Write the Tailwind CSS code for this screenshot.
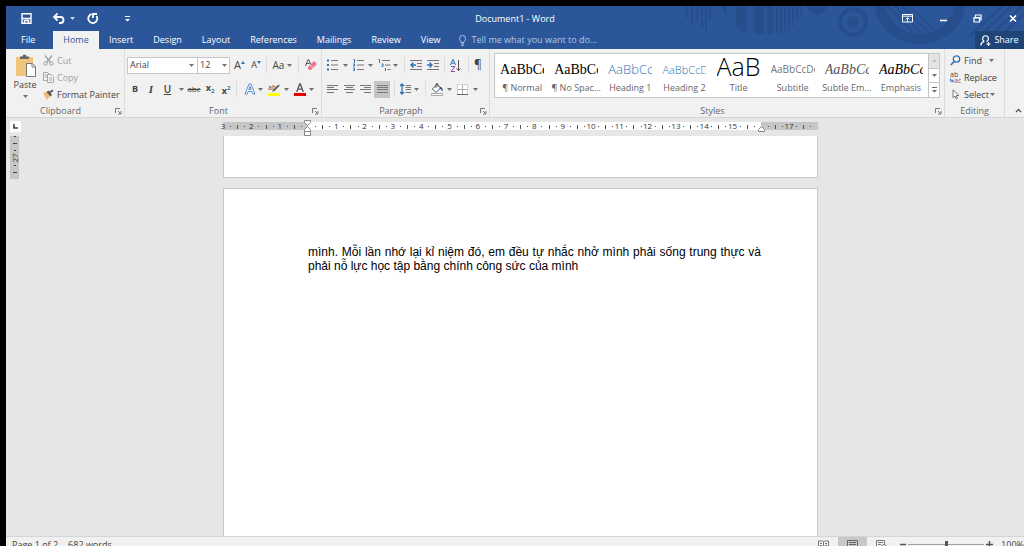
<!DOCTYPE html>
<html lang="en">
<head>
    <meta charset="UTF-8">
    <meta name="viewport" content="width=device-width, initial-scale=1.0">
    <title>Document1 - Word</title>
    <script src="https://cdn.jsdelivr.net/npm/@tailwindcss/browser@4"></script>
</head>
<body class="bg-black">
    <!-- shared symbols -->
    <svg class="hidden">
        <symbol id="caret" viewBox="0 0 5 3"><path d="M0 0h5L2.500 3z" fill="currentColor" opacity=".75"/></symbol>
        <symbol id="launcher" viewBox="0 0 7 7"><path d="M.5 5V.5H5M3 3l2.500 2.500M6 3v3H3" fill="none" stroke="#777"/></symbol>
    </svg>

    <div class="h-screen pl-1.5 pt-1.5 flex flex-col overflow-hidden font-['Open_Sans','Noto_Sans',sans-serif] text-[9px] leading-3 text-[#444]">

        <!-- title bar + tabs -->
        <header class="relative shrink-0 bg-[#2b579a] text-white">
            <svg class="absolute right-0 top-0 pointer-events-none" width="344" height="43" viewBox="0 0 344 43" fill="#264e8c" stroke="#264e8c">
                <path d="M7 0v12M12 0v19M17 0v16M22 0v22M26 0v25M30 0v15" stroke-width="2" fill="none"/>
                <path d="M41 0h6v9z M56 0h10v27q-6-2-10-7z M74 0h10v28q-5 1-10-1z" stroke="none"/>
                <path d="M87 0h6v28h-6z" stroke="none"/>
                <path d="M97 0v28M101 0v27M105 0v26M109 0v24M113 0v20M117 0v15M121 0v9" stroke-width="2" fill="none"/>
                <path d="M127 0h20q-3 9-10 9t-10-9z" stroke="none"/>
                <circle cx="173" cy="16" r="13" stroke-width="4" fill="none"/>
                <circle cx="173" cy="16" r="6" stroke="none"/>
                <path d="M200-5a40 38 0 0 0 80 0" stroke-width="11" fill="none"/>
                <path d="M208 0l32 34M215 0l32 33M222 0l32 31M229 0l30 28" stroke-width="2" fill="none"/>
                <path d="M290 30L322 0M300 30L332 0M310 30L342 0M324 27L344 8" stroke-width="3" fill="none"/>
            </svg>

            <div class="relative flex items-center h-[25px]">
                <div class="flex-1 flex items-center">
                    <button aria-label="Save" class="ml-[15px]"><svg class="block" width="11" height="11" viewBox="0 0 11 11"><path d="M1 .7h9v9.600H1zM1 5.500h9M3.500 10V7.500h4V10" fill="none" stroke="#fff" stroke-width="1.400"/></svg></button>
                    <button aria-label="Undo" class="ml-[21px]"><svg class="block" width="12" height="11" viewBox="0 0 12 11"><path d="M1 4h6.500a3 3 0 0 1 0 6H6M4.500.5L1 4l3.500 3.500" fill="none" stroke="#fff" stroke-width="1.800"/></svg></button>
                    <button aria-label="Undo list" class="ml-[5px]"><svg class="block" width="5" height="3"><use href="#caret"/></svg></button>
                    <button aria-label="Repeat" class="ml-3"><svg class="block" width="12" height="11" viewBox="0 0 12 11"><path d="M4.500 1.200a4.500 4.500 0 1 0 5 1.800M6 5V1h4" fill="none" stroke="#fff" stroke-width="1.800"/></svg></button>
                    <button aria-label="Customize Quick Access Toolbar" class="ml-[26px]"><svg class="block" width="5" height="6" viewBox="0 0 5 6"><path d="M0 .5h5" stroke="#fff"/><path d="M0 3h5L2.500 5.500z" fill="#fff"/></svg></button>
                </div>
                <h1>Document1 - Word</h1>
                <div class="flex-1 flex justify-end gap-3">
                    <button aria-label="Ribbon Display Options" class="w-[23px] flex justify-center"><svg width="11" height="9" viewBox="0 0 11 9"><path d="M.5.5h10v7.500H.5zM.5 2.200h10M5.500 7.500V4M3.700 5.500l1.800-1.800 1.800 1.800" fill="none" stroke="#fff"/></svg></button>
                    <button aria-label="Minimize" class="w-[23px] flex justify-center"><svg width="8" height="9"><path d="M1 6.500h7" stroke="#fff" stroke-width="1.600"/></svg></button>
                    <button aria-label="Restore" class="w-[23px] flex justify-center"><svg width="9" height="9" viewBox="0 0 9 9"><path d="M1 3.500h5.500V8H1zM2.500 3V1h5.500v5H7M1 4h5" fill="none" stroke="#fff" stroke-width="1.200"/></svg></button>
                    <button aria-label="Close" class="w-[23px] flex justify-center"><svg width="8" height="9" viewBox="0 0 8 9"><path d="M1 1.500l6 6M7 1.500l-6 6" stroke="#fff" stroke-width="1.700"/></svg></button>
                </div>
            </div>

            <nav class="relative flex items-stretch h-[18px]">
                <a href="#" class="w-[47px] pl-[15px] leading-[18px]">File</a>
                <a href="#" class="w-[46px] text-center leading-[18px] bg-[#f1f1f1] text-[#2b579a]">Home</a>
                <a href="#" class="px-2.5 leading-[18px]">Insert</a>
                <a href="#" class="px-2.5 leading-[18px]">Design</a>
                <a href="#" class="px-2.5 leading-[18px]">Layout</a>
                <a href="#" class="px-2.5 leading-[18px]">References</a>
                <a href="#" class="px-2.5 leading-[18px]">Mailings</a>
                <a href="#" class="px-2.5 leading-[18px]">Review</a>
                <a href="#" class="px-2.5 leading-[18px]">View</a>
                <label class="flex items-center gap-1 ml-2 text-[#b4c6e2]">
                    <svg width="9" height="11" viewBox="0 0 9 11"><path d="M3 7.500C3 6 1.500 5.500 1.500 3.500a3 3 0 0 1 6 0C7.500 5.500 6 6 6 7.500zM3 9h3M3.500 10.500h2" fill="none" stroke="currentColor"/></svg>
                    <input type="text" aria-label="Tell me" placeholder="Tell me what you want to do..." class="w-[150px] bg-transparent outline-none placeholder:text-[#b4c6e2]">
                </label>
                <button class="ml-auto w-[49px] flex items-center justify-center gap-[3px] bg-[#1e4478]">
                    <svg width="11" height="11" viewBox="0 0 11 11"><path d="M4.300 6.300a2.900 2.900 0 1 1 2.400 0M.8 10.500C1 8 2.500 6.800 4.300 6.300M6.500 6.300l.8.500M8.500 7v4M6.500 9h4" fill="none" stroke="#fff" stroke-width="1.200"/></svg>
                    Share
                </button>
            </nav>
        </header>

        <!-- ribbon -->
        <section class="shrink-0 flex h-[69px] bg-[#f1f1f1] border-b border-[#d5d5d5]">

            <div class="w-[118px] flex flex-col">
                <div class="flex-1 flex pl-2">
                    <button class="w-[22px] flex flex-col items-center pt-[5px]">
                        <svg width="22" height="24" viewBox="0 0 22 24"><path d="M2 3h17v19H2z" fill="#eec57b"/><path d="M6 5V2.500h2.500a2 2 0 0 1 4 0H15V5z" fill="#666"/><path d="M12.500 9.500h6l3 3v10h-9z" fill="#fff" stroke="#777"/><path d="M18 9.500V13h3.500" fill="none" stroke="#777"/></svg>
                        <span class="mt-px">Paste</span>
                        <svg class="mt-1" width="5" height="3"><use href="#caret"/></svg>
                    </button>
                    <div class="flex flex-col pl-[7px] pt-[3px]">
                        <button class="h-[17px] flex items-center gap-[3px] text-[#a0a0a0]">
                            <svg width="11" height="11" viewBox="0 0 11 11"><path d="M2 .5l5.500 7M9 .5L3.500 7.500" fill="none" stroke="#a0a0a0" stroke-width="1.300"/><circle cx="2.500" cy="8.500" r="1.700" fill="none" stroke="#a0a0a0"/><circle cx="8.500" cy="8.500" r="1.700" fill="none" stroke="#a0a0a0"/></svg>Cut
                        </button>
                        <button class="h-[17px] flex items-center gap-[3px] text-[#a0a0a0]">
                            <svg width="11" height="11" viewBox="0 0 11 11"><path d="M4 8.500H.5v-8h4l1.500 1.500M4.500 2.500h4l2 2v6h-6zM2 3h2M2 5h2M6 6h3M6 8h3" fill="none" stroke="#a8a8a8"/></svg>Copy
                        </button>
                        <button class="h-[17px] flex items-center gap-[3px] whitespace-nowrap">
                            <svg width="11" height="11" viewBox="0 0 11 11"><path d="M0 4l4-1 3 4-3 4z" fill="#eeb96a"/><path d="M3.500 3l2-1.500L9 6 7.500 7.500zM6.500 2.500L9.500.5l1 1.500-3 2z" fill="#555"/></svg>Format Painter
                        </button>
                    </div>
                </div>
                <div class="h-3 flex items-center"><span class="flex-1 text-center text-[#666]">Clipboard</span><button aria-label="Clipboard settings" class="mr-0.5"><svg class="block" width="7" height="7"><use href="#launcher"/></svg></button></div>
            </div>

            <div class="w-[197px] flex flex-col border-l border-[#dcdcdc]">
                <div class="flex-1 pl-0.5 pt-2">
                    <div class="flex items-center h-4">
                        <div class="w-[71px] h-[17px] flex items-center bg-white border border-[#c6c6c6] pl-0.5 pr-[3px]">
                            <select aria-label="Font" class="flex-1 min-w-0 appearance-none outline-none"><option>Arial</option></select>
                            <svg width="5" height="3"><use href="#caret"/></svg>
                        </div>
                        <div class="w-8 h-[17px] flex items-center bg-white border border-l-0 border-[#c6c6c6] pl-0.5 pr-0.5">
                            <select aria-label="Font size" class="flex-1 min-w-0 appearance-none outline-none"><option>12</option></select>
                            <svg width="5" height="3"><use href="#caret"/></svg>
                        </div>
                        <button aria-label="Grow Font" class="w-[17px] flex items-center justify-center ml-px text-[11px]">A<svg class="mb-1.5" width="4" height="3"><path d="M0 3h4L2 0z" fill="#2f70b7"/></svg></button>
                        <button aria-label="Shrink Font" class="w-4 flex items-center justify-center">A<svg class="mb-1.5" width="4" height="3"><path d="M0 0h4L2 3z" fill="#2f70b7"/></svg></button>
                        <i class="w-px h-4 mx-0.5 bg-[#dcdcdc]"></i>
                        <button aria-label="Change Case" class="w-[27px] flex items-center justify-center gap-[3px] text-[10px]">Aa<svg width="5" height="3"><use href="#caret"/></svg></button>
                        <i class="w-px h-4 mx-0.5 bg-[#dcdcdc]"></i>
                        <button aria-label="Clear Formatting" class="ml-1"><svg class="block" width="12" height="12" viewBox="0 0 12 12"><path d="M.5 7L3 .7h.8L6 6M1.500 4.500h3" fill="none" stroke="#555"/><path d="M3 8l6-6 3 3-6 6H4.500L3 9.500z" fill="#e8788e"/><path d="M5 6l3.500 3" stroke="#f7d3da"/></svg></button>
                    </div>
                    <div class="flex items-center h-4 mt-2">
                        <button class="w-4 font-bold">B</button>
                        <button class="w-4 italic font-['Liberation_Serif',serif] text-[11px] font-bold">I</button>
                        <button class="w-[17px] font-semibold text-[10px] underline">U</button>
                        <button aria-label="Underline style" class="w-2.5 flex justify-center"><svg width="5" height="3"><use href="#caret"/></svg></button>
                        <button class="w-4 flex justify-center line-through text-[8px]">abc</button>
                        <button aria-label="Subscript" class="w-4 font-bold">x<span class="text-[6px] align-[-2px] text-[#2f70b7]">2</span></button>
                        <button aria-label="Superscript" class="w-4 font-bold">x<span class="text-[6px] align-[4px] text-[#2f70b7]">2</span></button>
                        <i class="w-px h-4 ml-0.5 mr-[7px] bg-[#dcdcdc]"></i>
                        <button aria-label="Text Effects" class="w-6 flex items-center gap-0.5"><svg width="12" height="12" viewBox="0 0 12 12"><path d="M1 11L5 1h2l4 10H8.800L8 8.500H4L3.200 11zM4.800 6.500h2.400L6 3.200z" fill="#fff" stroke="#4a83c4" stroke-width=".9"/></svg><svg width="5" height="3"><use href="#caret"/></svg></button>
                        <button aria-label="Text Highlight Color" class="w-[26px] flex items-center gap-1"><svg width="12" height="13" viewBox="0 0 12 13"><path d="M0 10h12v3H0z" fill="#ffff00"/><path d="M4 9l1-2 5.500-5.500 1.300 1.200L6.500 8z" fill="#666"/><text x="0" y="7" font-size="7" fill="#444">ab</text></svg><svg width="5" height="3"><use href="#caret"/></svg></button>
                        <button aria-label="Font Color" class="w-[22px] flex items-center gap-[3px]"><svg width="12" height="13" viewBox="0 0 12 13"><path d="M0 10h12v3H0z" fill="#e60000"/><path d="M2.700 9L5.700 1h.6l3 8M4 6.200h4" fill="none" stroke="#555" stroke-width="1.300"/></svg><svg width="5" height="3"><use href="#caret"/></svg></button>
                    </div>
                </div>
                <div class="h-3 flex items-center"><span class="flex-1 text-center text-[#666]">Font</span><button aria-label="Font settings" class="mr-0.5"><svg class="block" width="7" height="7"><use href="#launcher"/></svg></button></div>
            </div>

            <div class="w-[168px] flex flex-col border-l border-[#dcdcdc]">
                <div class="flex-1 pl-[5px] pt-2">
                    <div class="flex items-center h-4">
                        <button aria-label="Bullets" class="w-[26px] flex items-center gap-1"><svg width="12" height="12" viewBox="0 0 12 12"><path d="M0 1.500h2M0 6h2M0 10.500h2" stroke="#2f70b7" stroke-width="2"/><path d="M4 1.500h7M4 6h7M4 10.500h7" stroke="#777"/></svg><svg width="5" height="3"><use href="#caret"/></svg></button>
                        <button aria-label="Numbering" class="w-[25px] flex items-center gap-[3px]"><svg width="12" height="12" viewBox="0 0 12 12"><path d="M.5.5h1V4M0 5h1.500v2H0M0 9h1.500v2.500H0" fill="none" stroke="#2f70b7"/><path d="M4 1.500h7M4 6h7M4 10.500h7" stroke="#777"/></svg><svg width="5" height="3"><use href="#caret"/></svg></button>
                        <button aria-label="Multilevel List" class="w-[26px] flex items-center gap-0.5"><svg width="13" height="12" viewBox="0 0 13 12"><path d="M.5.5h1V4M3.500 5H5v2.500H3.500M7.500 9v3" fill="none" stroke="#2f70b7"/><path d="M4 1.500h8M7 6h5.500M9.500 10.500h3" stroke="#777"/></svg><svg width="5" height="3"><use href="#caret"/></svg></button>
                        <i class="w-px h-4 mr-[5px] bg-[#dcdcdc]"></i>
                        <button aria-label="Decrease Indent" class="w-[17px]"><svg class="block" width="12" height="11" viewBox="0 0 12 11"><path d="M0 .5h12M7 3.500h5M7 6.500h5M0 9.500h12" stroke="#777"/><path d="M6 5H1M3.500 2.500L1 5l2.500 2.500" fill="none" stroke="#2f70b7" stroke-width="1.400"/></svg></button>
                        <button aria-label="Increase Indent" class="w-[17px]"><svg class="block" width="12" height="11" viewBox="0 0 12 11"><path d="M0 .5h12M7 3.500h5M7 6.500h5M0 9.500h12" stroke="#777"/><path d="M0 5h5M2.500 2.500L5 5 2.500 7.500" fill="none" stroke="#2f70b7" stroke-width="1.400"/></svg></button>
                        <i class="w-px h-4 mr-[5px] bg-[#dcdcdc]"></i>
                        <button aria-label="Sort" class="w-[18px]"><svg class="block" width="12" height="13" viewBox="0 0 12 13"><path d="M.5 6L2.800.5h.4L5.500 6M1.500 4.200h3" fill="none" stroke="#2f70b7"/><path d="M1 7.500h4L1 12.500h4" fill="none" stroke="#84559c"/><path d="M8.500 1v10.500M6.500 9.500l2 2 2-2" fill="none" stroke="#555"/></svg></button>
                        <i class="w-px h-4 mr-[3px] bg-[#dcdcdc]"></i>
                        <button aria-label="Show/Hide" class="w-3 text-[12px]">¶</button>
                    </div>
                    <div class="flex items-center h-4 mt-2">
                        <button aria-label="Align Left" class="w-[17px]"><svg class="block" width="11" height="10" viewBox="0 0 11 10"><path d="M0 1.500h11M0 3.500h7M0 5.500h11M0 8.500h7" stroke="#777"/></svg></button>
                        <button aria-label="Center" class="w-4"><svg class="block" width="11" height="10" viewBox="0 0 11 10"><path d="M0 1.500h11M2 3.500h7M0 5.500h11M2 8.500h7" stroke="#777"/></svg></button>
                        <button aria-label="Align Right" class="w-[14px]"><svg class="block" width="11" height="10" viewBox="0 0 11 10"><path d="M0 1.500h11M4 3.500h7M0 5.500h11M4 8.500h7" stroke="#777"/></svg></button>
                        <button aria-label="Justify" class="w-4 h-[17px] flex items-center justify-center bg-[#c5c5c5]"><svg width="11" height="10" viewBox="0 0 11 10"><path d="M0 1.500h11M0 3.500h11M0 5.500h11M0 8.500h11" stroke="#777"/></svg></button>
                        <i class="w-px h-4 ml-1 mr-[5px] bg-[#dcdcdc]"></i>
                        <button aria-label="Line Spacing" class="w-[25px] flex items-center gap-[3px]"><svg width="11" height="12" viewBox="0 0 11 12"><path d="M2 1v10M0 3l2-2 2 2M0 9l2 2 2-2" fill="none" stroke="#2f70b7" stroke-width="1.300"/><path d="M5.500 2.500H11M5.500 4.500H11M5.500 6.500H11M5.500 9.500H11" stroke="#777"/></svg><svg width="5" height="3"><use href="#caret"/></svg></button>
                        <i class="w-px h-4 mr-[5px] bg-[#dcdcdc]"></i>
                        <button aria-label="Shading" class="w-[26px] flex items-center gap-[3px]"><svg width="13" height="13" viewBox="0 0 13 13"><path d="M.5 10.500h11v2H.5z" fill="#fff" stroke="#aaa"/><path d="M6 1L1.500 6 5 9.500 9.500 5z" fill="#fff" stroke="#555"/><path d="M5 5V1.500a1 1 0 0 1 2 0V4" fill="none" stroke="#555"/><path d="M9 3.500q3.500 1 2.500 5-1-2-3-3z" fill="#2f5f9f"/></svg><svg width="5" height="3"><use href="#caret"/></svg></button>
                        <button aria-label="Borders" class="flex items-center gap-[5px]"><svg width="11" height="11" viewBox="0 0 11 11"><path d="M.5.5h10v10H.5z" fill="#fff" stroke="#aaa" stroke-dasharray="1 1"/><path d="M5.500 1v9M1 5.500h9" stroke="#aaa"/><path d="M0 10.500h11" stroke="#666"/></svg><svg width="5" height="3"><use href="#caret"/></svg></button>
                    </div>
                </div>
                <div class="h-3 flex items-center"><span class="flex-1 text-center text-[#666]">Paragraph</span><button aria-label="Paragraph settings" class="mr-0.5"><svg class="block" width="7" height="7"><use href="#launcher"/></svg></button></div>
            </div>

            <div class="flex-1 min-w-0 flex flex-col border-l border-[#dcdcdc]">
                <div class="flex-1 pl-1 pr-1 pt-1">
                    <div class="h-[45px] flex bg-white border border-[#c6c6c6]">
                        <div class="flex-1 min-w-0 grid grid-cols-8 text-[#666]">
                            <button class="flex flex-col items-center"><span class="h-7 w-11 overflow-hidden whitespace-nowrap text-left leading-[31px] font-['Liberation_Serif',serif] text-[14px] text-black">AaBbCcDd</span>¶ Normal</button>
                            <button class="flex flex-col items-center whitespace-nowrap"><span class="h-7 w-11 overflow-hidden whitespace-nowrap text-left leading-[31px] font-['Liberation_Serif',serif] text-[14px] text-black">AaBbCcDd</span>¶ No Spac...</button>
                            <button class="flex flex-col items-center"><span class="h-7 w-11 overflow-hidden whitespace-nowrap text-left leading-[31px] font-['Open_Sans',sans-serif] font-light text-[13px] text-[#2e74b5]">AaBbCcDd</span>Heading 1</button>
                            <button class="flex flex-col items-center"><span class="h-7 w-11 overflow-hidden whitespace-nowrap text-left leading-[31px] font-['Open_Sans',sans-serif] font-light text-[11px] text-[#2e74b5]">AaBbCcDd</span>Heading 2</button>
                            <button class="flex flex-col items-center"><span class="h-7 w-11 overflow-hidden whitespace-nowrap text-left leading-6 font-['Open_Sans',sans-serif] font-light text-[25px] text-black">AaBb</span>Title</button>
                            <button class="flex flex-col items-center"><span class="h-7 w-11 overflow-hidden whitespace-nowrap text-left leading-[31px] text-[10px] text-[#777]">AaBbCcDd</span>Subtitle</button>
                            <button class="flex flex-col items-center whitespace-nowrap"><span class="h-7 w-11 overflow-hidden whitespace-nowrap text-left leading-[31px] font-['Liberation_Serif',serif] italic text-[14px] text-[#555]">AaBbCcDd</span>Subtle Em...</button>
                            <button class="flex flex-col items-center"><span class="h-7 w-11 overflow-hidden whitespace-nowrap text-left leading-[31px] font-['Liberation_Serif',serif] italic text-[14px] text-black">AaBbCcDd</span>Emphasis</button>
                        </div>
                        <div class="w-[11px] flex flex-col border-l border-[#c6c6c6] divide-y divide-[#c6c6c6]">
                            <button aria-label="Previous row" class="flex-1 flex items-center justify-center bg-[#e4e4e4] text-[#b5b5b5]"><svg class="rotate-180" width="5" height="3"><use href="#caret"/></svg></button>
                            <button aria-label="Next row" class="flex-1 flex items-center justify-center"><svg width="5" height="3"><use href="#caret"/></svg></button>
                            <button aria-label="More styles" class="flex-1 flex items-center justify-center"><svg width="5" height="6" viewBox="0 0 5 6"><path d="M0 .5h5" stroke="#666"/><path d="M0 3h5L2.500 5.500z" fill="#666"/></svg></button>
                        </div>
                    </div>
                </div>
                <div class="h-3 flex items-center"><span class="flex-1 text-center text-[#666]">Styles</span><button aria-label="Styles settings" class="mr-0.5"><svg class="block" width="7" height="7"><use href="#launcher"/></svg></button></div>
            </div>

            <div class="w-[60px] flex flex-col border-l border-[#dcdcdc]">
                <div class="flex-1 flex flex-col pl-[5px] pt-[3px]">
                    <button class="h-[17px] flex items-center gap-[3px]"><svg width="11" height="11" viewBox="0 0 11 11"><circle cx="6.500" cy="4" r="3.200" fill="none" stroke="#2f70b7" stroke-width="1.300"/><path d="M4.200 6.500L.8 10" stroke="#2f70b7" stroke-width="1.700"/></svg>Find<svg class="ml-1" width="5" height="3"><use href="#caret"/></svg></button>
                    <button class="h-[17px] flex items-center gap-[3px]"><svg width="11" height="12" viewBox="0 0 11 12"><text x="0" y="5" font-size="7" fill="#444">ab</text><text x="4" y="11" font-size="7" fill="#7d4fa0">ac</text><path d="M.5 6.500v2.500H3M2 7.500L3.500 9 2 10.500" fill="none" stroke="#2f70b7"/></svg>Replace</button>
                    <button class="h-[17px] flex items-center gap-[3px]"><svg width="11" height="11" viewBox="0 0 11 11"><path d="M3 .8v8l2-1.800 1.200 3 1.300-.6L6.300 6.500H9z" fill="#fff" stroke="#777"/></svg>Select<svg class="-ml-0.5" width="5" height="3"><use href="#caret"/></svg></button>
                </div>
                <div class="h-3 text-center text-[#666]">Editing</div>
            </div>

            <div class="w-5 flex items-end justify-end border-l border-[#dcdcdc] pb-1 pr-0.5">
                <button aria-label="Collapse the Ribbon"><svg class="block" width="7" height="5"><path d="M1 4l2.500-2.500L6 4" fill="none" stroke="#555" stroke-width="1.300"/></svg></button>
            </div>
        </section>

        <!-- document area -->
        <main class="flex-1 min-h-0 flex bg-[#e6e6e6]">
            <div class="w-[14px] shrink-0 pl-1">
                <button aria-label="Tab selector" class="mt-[3px] size-[11px] flex items-center justify-center bg-white"><svg width="5" height="5"><path d="M1 0v4h4" fill="none" stroke="#444" stroke-width="1.600"/></svg></button>
                <svg class="block mt-1" width="9" height="43" viewBox="0 0 9 43">
                    <path d="M0 0h9v43H0z" fill="#c6c6c6"/>
                    <path d="M4 .5h2M3 7.500h4M4 14.500h2M4 29.500h2M3 36.500h4" stroke="#444"/>
                    <text transform="translate(7.500 22) rotate(-90)" text-anchor="middle" font-size="8" fill="#333">27</text>
                </svg>
            </div>
            <div class="flex-1 min-w-0 flex flex-col items-center pr-[3px] overflow-hidden">
                <svg id="ruler" class="shrink-0 overflow-visible" width="595" height="18" viewBox="0 0 595 18">
                    <path d="M0 4h595v8H0z" fill="#c6c6c6"/>
                    <path d="M85 4h453v8H85z" fill="#fff"/>
                </svg>
                <article class="shrink-0 w-[595px] h-[42px] bg-white border border-t-0 border-[#c8c8c8]"></article>
                <article class="flex-1 min-h-0 w-[595px] mt-2.5 pl-[84px] pr-14 pt-14 bg-white border border-b-0 border-[#c8c8c8] text-black">
                    <p class="font-['Liberation_Sans',Arial,sans-serif] text-[12px] leading-[14px] text-justify" lang="vi">mình. Mỗi lần nhớ lại kỉ niệm đó, em đều tự nhắc nhở mình phải sống trung thực và phải nỗ lực học tập bằng chính công sức của mình</p>
                </article>
            </div>
        </main>

        <!-- status bar, its lower part runs past the window edge -->
        <footer class="shrink-0 h-4 -mb-1.5 flex items-center pl-1.5 bg-[#f1f1f1] border-t border-[#d5d5d5]">
            <span>Page 1 of 2</span>
            <span class="ml-2.5">682 words</span>
            <div class="ml-auto flex items-center self-stretch">
                <button aria-label="Read Mode" class="w-[29px] flex justify-center"><svg width="11" height="10" viewBox="0 0 11 10"><path d="M.5 1h4l1 1 1-1h4v8h-4l-1 1-1-1h-4zM5.500 2v8M2 3.500h2M2 5.500h2M7 3.500h2M7 5.500h2" fill="none" stroke="#777"/></svg></button>
                <button aria-label="Print Layout" class="w-[29px] self-stretch flex items-center justify-center bg-[#c8c8c8]"><svg width="11" height="10" viewBox="0 0 11 10"><path d="M.5.5h10v9H.5zM2 2.500h7M2 4.500h7M2 6.500h7" fill="none" stroke="#666"/></svg></button>
                <button aria-label="Web Layout" class="w-[29px] flex justify-center"><svg width="11" height="10" viewBox="0 0 11 10"><path d="M5 9.500H.5v-9h8V4M2 2.500h5M2 4.500h3M2 6.500h2" fill="none" stroke="#777"/><circle cx="8" cy="7" r="2.500" fill="none" stroke="#777"/></svg></button>
                <button aria-label="Zoom Out" class="ml-1 w-2"><svg class="block" width="6" height="7"><path d="M0 3.500h6" stroke="#555" stroke-width="1.500"/></svg></button>
                <input type="range" aria-label="Zoom" min="0" max="100" value="50" class="w-[76px] h-px appearance-none bg-[#a0a0a0] [&::-webkit-slider-thumb]:appearance-none [&::-webkit-slider-thumb]:w-[3px] [&::-webkit-slider-thumb]:h-2 [&::-webkit-slider-thumb]:bg-[#555]">
                <button aria-label="Zoom In" class="ml-0.5 w-[15px]"><svg class="block" width="7" height="7"><path d="M0 3.500h7M3.500 0v7" stroke="#555" stroke-width="1.500"/></svg></button>
                <span>100%</span>
            </div>
        </footer>
    </div>

    <script>
        // ruler marks: one number per cm, a tick at each half, dots at the quarters
        const ruler = document.getElementById('ruler');
        const zero = 85;
        const cm = 28.3;

        function add(name, attrs, text) {
            const el = document.createElementNS('http://www.w3.org/2000/svg', name);
            for (const key in attrs) el.setAttribute(key, attrs[key]);
            if (text) el.textContent = text;
            ruler.appendChild(el);
        }

        for (let q = -12; q <= 71; q++) {
            const x = zero + q * cm / 4;
            if (q % 4 === 0) {
                if (q !== 0 && q !== 64) {
                    add('text', { x: x, y: 11, 'font-size': 8, 'text-anchor': 'middle', fill: '#333' }, String(Math.abs(q / 4)));
                }
            } else if (q % 2 === 0) {
                add('rect', { x: Math.round(x), y: 7, width: 1, height: 4, fill: '#555' });
            } else {
                add('rect', { x: Math.round(x), y: 8, width: 1, height: 1, fill: '#555' });
            }
        }

        // indent markers
        add('path', { d: 'M81.5 2.500h6v2l-3 3-3-3zM81.5 13.500v-2l3-3 3 3v2zM81.5 13.500h6v4h-6z', fill: '#fff', stroke: '#888' });
        add('path', { d: 'M535.5 13.500v-2l3-3 3 3v2z', fill: '#fff', stroke: '#888' });
    </script>
</body>
</html>
